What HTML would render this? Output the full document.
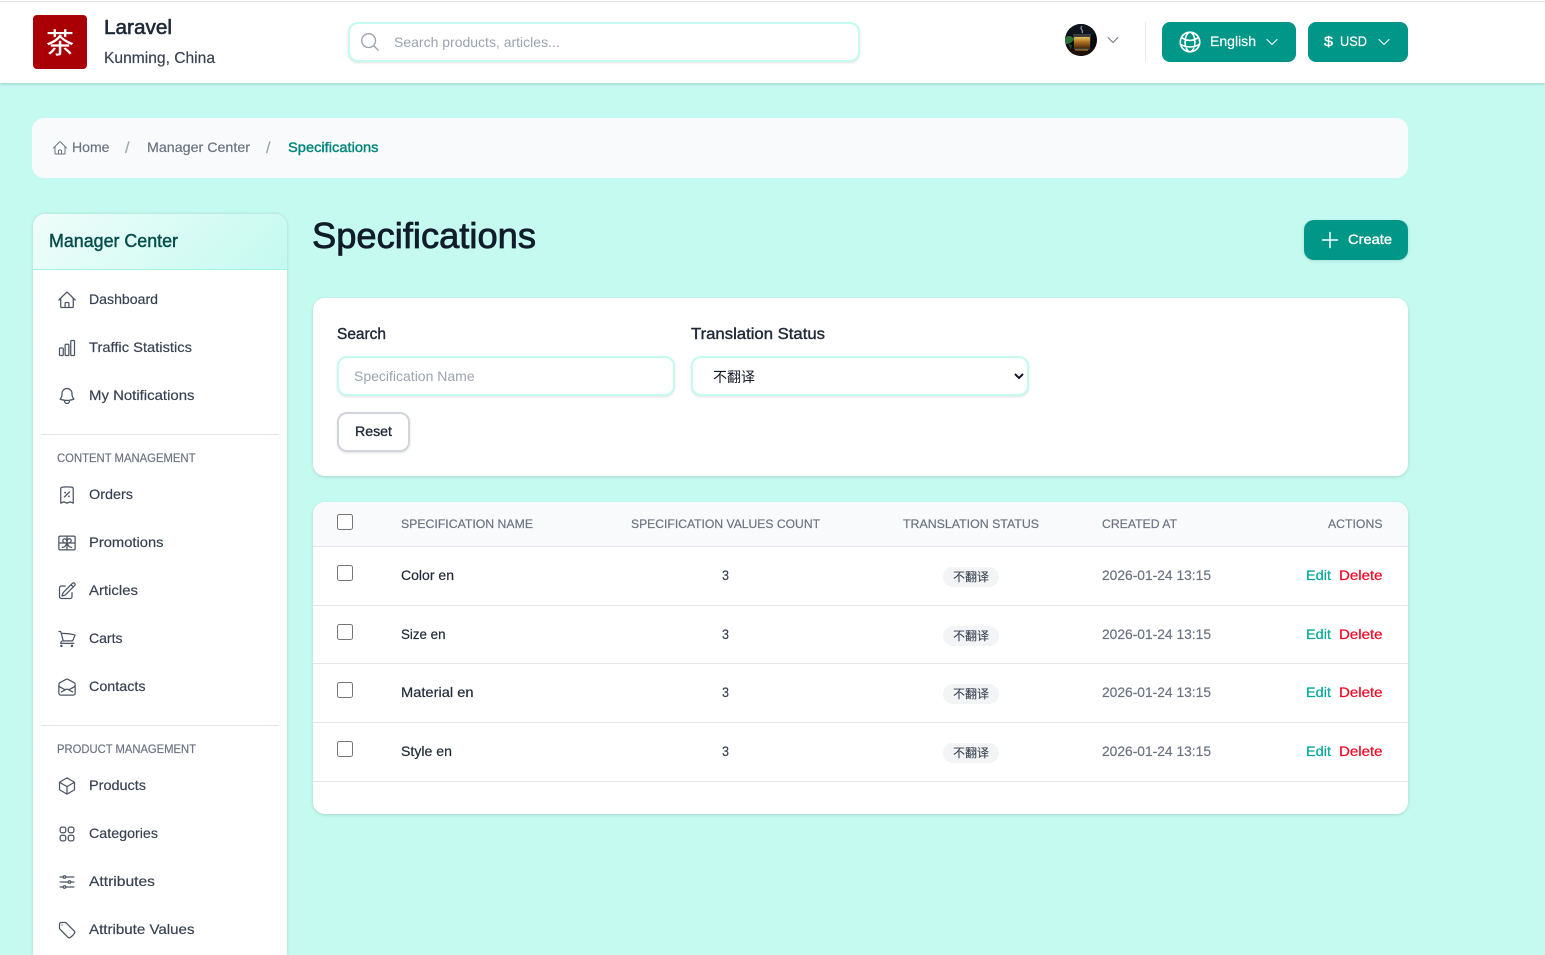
<!DOCTYPE html>
<html lang="en"><head><meta charset="utf-8"><title>Specifications</title>
<style>
*{box-sizing:border-box}
html,body{margin:0;padding:0;width:1545px;height:955px;overflow:hidden;background:#c4faef;font-family:"Liberation Sans","Noto Sans CJK SC",sans-serif}
.b{position:absolute;display:block}
input,select{position:absolute;margin:0;font-family:"Liberation Sans","Noto Sans CJK SC",sans-serif;outline:none}
input[type=text]{background:#fff;border:2px solid #c4faef;border-radius:10px;font-size:14px;color:#374151;box-shadow:0 1px 2px rgba(0,0,0,.12)}
input::placeholder{color:#9ca3af;opacity:1}
input[type=checkbox]{width:16px;height:16px;left:337px}
svg.layer{position:absolute;left:0;top:0;z-index:5;pointer-events:none}
text{font-family:"Liberation Sans","Noto Sans CJK SC",sans-serif;font-size:14px;fill:#374151;stroke:#374151;stroke-width:.18px}
text[style*="#6b7280"]{stroke:#6b7280}
text[style*="#fff"]{stroke:#fff}
text[style*="#00a896"]{stroke:#00a896}
text[style*="#f5001f"]{stroke:#f5001f}
.m{stroke-width:.35px}
.ic{fill:none;stroke:#4b5563;stroke-width:1.5;stroke-linecap:round;stroke-linejoin:round}
.w{fill:none;stroke:#fff;stroke-width:1.5;stroke-linecap:round;stroke-linejoin:round}
</style></head><body>

<!-- header -->
<div class="b" style="left:0;top:0;width:1545px;height:83px;background:#fff;box-shadow:0 1px 3px rgba(0,0,0,.18)"></div>
<div class="b" style="left:0;top:1px;width:1545px;height:1px;background:#e2e4e8"></div>
<div class="b" style="left:33px;top:15px;width:54px;height:54px;background:#a90005;border-radius:4px"></div>
<input type="text" placeholder="Search products, articles..." style="left:348px;top:22px;width:512px;height:40px;padding-left:44px">
<div class="b" style="left:1145px;top:22px;width:1px;height:40px;background:#e5e7eb"></div>
<div class="b" style="left:1162px;top:22px;width:134px;height:40px;background:#009688;border-radius:8px"></div>
<div class="b" style="left:1308px;top:22px;width:100px;height:40px;background:#009688;border-radius:8px"></div>

<!-- breadcrumb -->
<div class="b" style="left:32px;top:118px;width:1376px;height:60px;background:#f9fafb;border-radius:12px"></div>

<!-- sidebar -->
<div class="b" style="left:33px;top:214px;width:254px;height:741px;background:#fff;border-radius:12px 12px 0 0;box-shadow:0 0 3px rgba(0,0,0,.14)"></div>
<div class="b" style="left:33px;top:214px;width:254px;height:56px;background:linear-gradient(135deg,#f0fdfa 0%,#c4faef 100%);border-radius:12px 12px 0 0;border-bottom:1px solid #a3f3e1"></div>
<div class="b" style="left:41px;top:434px;width:238px;height:1px;background:#e5e7eb"></div>
<div class="b" style="left:41px;top:725px;width:238px;height:1px;background:#e5e7eb"></div>

<!-- create -->
<div class="b" style="left:1304px;top:220px;width:104px;height:40px;background:#009688;border-radius:10px;box-shadow:0 1px 3px rgba(0,0,0,.12)"></div>

<!-- filter card -->
<div class="b" style="left:313px;top:298px;width:1095px;height:178px;background:#fff;border-radius:12px;box-shadow:0 1px 3px rgba(0,0,0,.14)"></div>
<input type="text" placeholder="Specification Name" style="left:337px;top:356px;width:338px;height:40px;padding-left:15px">
<select style="left:691px;top:356px;width:338px;height:40px;background:#fff;border:2px solid #c4faef;border-radius:10px;font-size:14px;color:#111827;padding:2px 0 0 16px;box-shadow:0 1px 2px rgba(0,0,0,.12)"><option>不翻译</option></select>
<div class="b" style="left:337px;top:412px;width:73px;height:40px;background:#fff;border:2px solid #d1d5db;border-radius:10px;box-shadow:0 1px 2px rgba(0,0,0,.12)"></div>

<!-- table card -->
<div class="b" style="left:313px;top:502px;width:1095px;height:312px;background:#fff;border-radius:12px;box-shadow:0 1px 3px rgba(0,0,0,.14)"></div>
<div class="b" style="left:313px;top:502px;width:1095px;height:45px;background:#f9fafb;border-radius:12px 12px 0 0;border-bottom:1px solid #e5e7eb"></div>
<div class="b" style="left:313px;top:605px;width:1095px;height:1px;background:#e5e7eb"></div>
<div class="b" style="left:313px;top:663px;width:1095px;height:1px;background:#e5e7eb"></div>
<div class="b" style="left:313px;top:722px;width:1095px;height:1px;background:#e5e7eb"></div>
<div class="b" style="left:313px;top:781px;width:1095px;height:1px;background:#e5e7eb"></div>
<input type="checkbox" style="top:514px"><input type="checkbox" style="top:565px"><input type="checkbox" style="top:624px"><input type="checkbox" style="top:682px"><input type="checkbox" style="top:741px">
<div class="b" style="left:943px;top:567px;width:56px;height:20px;background:#f3f4f6;border-radius:10px"></div>
<div class="b" style="left:943px;top:626px;width:56px;height:20px;background:#f3f4f6;border-radius:10px"></div>
<div class="b" style="left:943px;top:684px;width:56px;height:20px;background:#f3f4f6;border-radius:10px"></div>
<div class="b" style="left:943px;top:743px;width:56px;height:20px;background:#f3f4f6;border-radius:10px"></div>

<svg class="layer" width="1545" height="955" viewBox="0 0 1545 955" xmlns="http://www.w3.org/2000/svg">
<defs>
<symbol id="home" viewBox="0 0 24 24"><path d="M2.25 12l8.954-8.955c.44-.439 1.152-.439 1.591 0L21.75 12M4.5 9.75v10.125c0 .621.504 1.125 1.125 1.125H9.75v-4.875c0-.621.504-1.125 1.125-1.125h2.25c.621 0 1.125.504 1.125 1.125V21h4.125c.621 0 1.125-.504 1.125-1.125V9.75M8.25 21h8.25"/></symbol>
<symbol id="chart" viewBox="0 0 24 24"><path d="M3 13.125C3 12.504 3.504 12 4.125 12h2.25c.621 0 1.125.504 1.125 1.125v6.75C7.5 20.496 6.996 21 6.375 21h-2.25A1.125 1.125 0 013 19.875v-6.75zM9.75 8.625c0-.621.504-1.125 1.125-1.125h2.25c.621 0 1.125.504 1.125 1.125v11.25c0 .621-.504 1.125-1.125 1.125h-2.25a1.125 1.125 0 01-1.125-1.125V8.625zM16.5 4.125c0-.621.504-1.125 1.125-1.125h2.25C20.496 3 21 3.504 21 4.125v15.75c0 .621-.504 1.125-1.125 1.125h-2.25a1.125 1.125 0 01-1.125-1.125V4.125z"/></symbol>
<symbol id="bell" viewBox="0 0 24 24"><path d="M14.857 17.082a23.848 23.848 0 005.454-1.31A8.967 8.967 0 0118 9.75v-.7V9A6 6 0 006 9v.75a8.967 8.967 0 01-2.312 6.022c1.733.64 3.56 1.085 5.455 1.31m5.714 0a24.255 24.255 0 01-5.714 0m5.714 0a3 3 0 11-5.714 0"/></symbol>
<symbol id="receipt" viewBox="0 0 24 24"><path d="M9 14.25l6-6m4.5-3.493V21.75l-3.75-1.5-3.75 1.5-3.75-1.5-3.75 1.5V4.757c0-1.108.806-2.057 1.907-2.185a48.507 48.507 0 0111.186 0c1.1.128 1.907 1.077 1.907 2.185zM9.75 9h.008v.008H9.75V9zm.375 0a.375.375 0 11-.75 0 .375.375 0 01.75 0zm4.125 4.5h.008v.008h-.008V13.5zm.375 0a.375.375 0 11-.75 0 .375.375 0 01.75 0z"/></symbol>
<symbol id="gift" viewBox="0 0 24 24"><path d="M12 3.75v16.5M2.25 12h19.5M6.375 17.25a4.875 4.875 0 004.875-4.875V12m6.375 5.25a4.875 4.875 0 01-4.875-4.875V12m-9 8.25h16.5a1.5 1.5 0 001.5-1.5V5.25a1.5 1.5 0 00-1.5-1.5H3.75a1.5 1.5 0 00-1.5 1.5v13.5a1.5 1.5 0 001.5 1.5zm12.621-9.44c-1.409 1.41-4.242 1.061-4.242 1.061s-.349-2.833 1.06-4.242a2.25 2.25 0 013.182 3.182zM10.773 7.63c1.409 1.409 1.06 4.242 1.06 4.242S9 12.22 7.592 10.811a2.25 2.25 0 113.182-3.182z"/></symbol>
<symbol id="pencil" viewBox="0 0 24 24"><path d="M16.862 4.487l1.687-1.688a1.875 1.875 0 112.652 2.652L10.582 16.07a4.5 4.5 0 01-1.897 1.13L6 18l.8-2.685a4.5 4.5 0 011.13-1.897l8.932-8.931zm0 0L19.5 7.125M18 14v4.75A2.25 2.25 0 0115.75 21H5.25A2.25 2.25 0 013 18.75V8.25A2.25 2.25 0 015.25 6H10"/></symbol>
<symbol id="cart" viewBox="0 0 24 24"><path d="M2.25 3h1.386c.51 0 .955.343 1.087.835l.383 1.437M7.5 14.25a3 3 0 00-3 3h15.75m-12.75-3h11.218c1.121-2.3 2.1-4.684 2.924-7.138a60.114 60.114 0 00-16.536-1.84M7.5 14.25L5.106 5.272M6 20.25a.75.75 0 11-1.5 0 .75.75 0 011.5 0zm12.75 0a.75.75 0 11-1.5 0 .75.75 0 011.5 0z"/></symbol>
<symbol id="mail" viewBox="0 0 24 24"><path d="M21.75 9v.906a2.25 2.25 0 01-1.183 1.981l-6.478 3.488M2.25 9v.906a2.25 2.25 0 001.183 1.981l6.478 3.488m8.839 2.51l-4.66-2.51m0 0l-1.023-.55a2.25 2.25 0 00-2.134 0l-1.022.55m0 0l-4.661 2.51m16.5 1.615a2.25 2.25 0 01-2.25 2.25h-15a2.25 2.25 0 01-2.25-2.25V8.844a2.25 2.25 0 011.183-1.98l7.5-4.04a2.25 2.25 0 012.134 0l7.5 4.04a2.25 2.25 0 011.183 1.98V18z"/></symbol>
<symbol id="cube" viewBox="0 0 24 24"><path d="M21 7.5l-9-5.25L3 7.5m18 0l-9 5.25m9-5.25v9l-9 5.25M3 7.5l9 5.25M3 7.5v9l9 5.25m0-9v9"/></symbol>
<symbol id="grid" viewBox="0 0 24 24"><path d="M3.75 6A2.25 2.25 0 016 3.75h2.25A2.25 2.25 0 0110.5 6v2.25a2.25 2.25 0 01-2.25 2.25H6a2.25 2.25 0 01-2.25-2.25V6zM3.75 15.75A2.25 2.25 0 016 13.5h2.25a2.25 2.25 0 012.25 2.25V18a2.25 2.25 0 01-2.25 2.25H6A2.25 2.25 0 013.75 18v-2.25zM13.5 6a2.25 2.25 0 012.25-2.25H18A2.25 2.25 0 0120.25 6v2.25A2.25 2.25 0 0118 10.5h-2.25a2.25 2.25 0 01-2.25-2.25V6zM13.5 15.75a2.25 2.25 0 012.25-2.25H18a2.25 2.25 0 012.25 2.25V18A2.25 2.25 0 0118 20.25h-2.25A2.25 2.25 0 0113.5 18v-2.25z"/></symbol>
<symbol id="adj" viewBox="0 0 24 24"><path d="M10.5 6h9.75M10.5 6a1.5 1.5 0 11-3 0m3 0a1.5 1.5 0 10-3 0M3.75 6H7.5m3 12h9.75m-9.75 0a1.5 1.5 0 01-3 0m3 0a1.5 1.5 0 00-3 0m-3.75 0H7.5m9-6h3.75m-3.75 0a1.5 1.5 0 01-3 0m3 0a1.5 1.5 0 00-3 0m-9.75 0h9.75"/></symbol>
<symbol id="tag" viewBox="0 0 24 24"><path d="M9.568 3H5.25A2.25 2.25 0 003 5.25v4.318c0 .597.237 1.17.659 1.591l9.581 9.581c.699.699 1.78.872 2.607.33a18.095 18.095 0 005.223-5.223c.542-.827.369-1.908-.33-2.607L11.16 3.66A2.25 2.25 0 009.568 3zM6 6h.008v.008H6V6z"/></symbol>
<symbol id="search" viewBox="0 0 24 24"><path d="M21 21l-5.197-5.197m0 0A7.5 7.5 0 105.196 5.196a7.5 7.5 0 0010.607 10.607z"/></symbol>
<symbol id="globe" viewBox="0 0 24 24"><path d="M12 21a9.004 9.004 0 008.716-6.747M12 21a9.004 9.004 0 01-8.716-6.747M12 21c2.485 0 4.5-4.03 4.5-9S14.485 3 12 3m0 18c-2.485 0-4.5-4.03-4.5-9S9.515 3 12 3m0 0a8.997 8.997 0 017.843 4.582M12 3a8.997 8.997 0 00-7.843 4.582m15.686 0A11.953 11.953 0 0112 10.5c-2.998 0-5.74-1.1-7.843-2.918m15.686 0A8.959 8.959 0 0121 12c0 .778-.099 1.533-.284 2.253m0 0A17.919 17.919 0 0112 16.5c-3.162 0-6.133-.815-8.716-2.247m0 0A9.004 9.004 0 013 12c0-1.605.42-3.113 1.157-4.418"/></symbol>
<symbol id="chev" viewBox="0 0 24 24"><path d="M19.5 8.25l-7.5 7.5-7.5-7.5"/></symbol>
<symbol id="plus" viewBox="0 0 24 24"><path d="M12 4.5v15m7.5-7.5h-15"/></symbol>
<clipPath id="avc"><circle cx="1081" cy="40" r="16"/></clipPath>
<linearGradient id="tea" x1="0" y1="0" x2="0" y2="1"><stop offset="0" stop-color="#e8c25a"/><stop offset=".5" stop-color="#a56a1c"/><stop offset="1" stop-color="#4a2c10"/></linearGradient>
</defs>

<!-- header content -->
<text x="60" y="53" text-anchor="middle" style="font-size:28px;fill:#fff">茶</text>
<text x="104" y="34" textLength="68" lengthAdjust="spacingAndGlyphs" style="font-size:20px;fill:#1f2937;stroke:#1f2937;stroke-width:.6px">Laravel</text>
<text x="104" y="63" textLength="111" lengthAdjust="spacingAndGlyphs" style="font-size:16px;fill:#374151">Kunming, China</text>
<use href="#search" x="359" y="31" width="22" height="22" style="fill:none;stroke:#9ca3af;stroke-width:1.5;stroke-linecap:round;stroke-linejoin:round"/>
<g clip-path="url(#avc)">
<rect x="1065" y="24" width="32" height="32" fill="#07090e"/>
<rect x="1065" y="24" width="32" height="11" fill="#10141d"/>
<path d="M1065 48h32v8h-32z" fill="#1d0f0a"/>
<path d="M1082 26c-3 3 2 4 0 7" fill="none" stroke="#8d99aa" stroke-width="1.2"/>
<path d="M1073 34h18l-1 14c0 1-1 2-2 2h-12c-1 0-2-1-2-2z" fill="#3a3d3c"/>
<rect x="1074" y="37" width="16" height="11" rx="1" fill="url(#tea)"/>
<path d="M1065 38c3-3 6-3 9 1-2 4-5 5-9 5z" fill="#2c7336"/>
<path d="M1068 44l4 1-1 4z" fill="#1e4f27"/>
<path d="M1075 50h13" stroke="#c78a2a" stroke-width="1"/>
</g>
<use href="#chev" x="1105" y="32" width="16" height="16" style="fill:none;stroke:#6b7280;stroke-width:1.5;stroke-linecap:round;stroke-linejoin:round"/>
<use href="#globe" class="w" x="1177" y="29" width="26" height="26"/>
<text x="1210" y="46" textLength="46" lengthAdjust="spacingAndGlyphs" style="fill:#fff">English</text>
<use href="#chev" class="w" x="1264" y="34" width="16" height="16"/>
<text x="1324" y="46" textLength="9" lengthAdjust="spacingAndGlyphs" class="m" style="fill:#fff">$</text>
<text x="1340" y="46" textLength="27" lengthAdjust="spacingAndGlyphs" style="fill:#fff">USD</text>
<use href="#chev" class="w" x="1376" y="34" width="16" height="16"/>

<!-- breadcrumb -->
<use href="#home" x="52" y="140" width="16" height="16" style="fill:none;stroke:#6b7280;stroke-width:1.5;stroke-linecap:round;stroke-linejoin:round"/>
<text x="72" y="152" textLength="37.5" lengthAdjust="spacingAndGlyphs" style="fill:#6b7280">Home</text>
<text x="125" y="153" style="font-size:16px;fill:#9ca3af;stroke:#9ca3af">/</text>
<text x="147" y="152" textLength="103" lengthAdjust="spacingAndGlyphs" style="fill:#6b7280">Manager Center</text>
<text x="266" y="153" style="font-size:16px;fill:#9ca3af;stroke:#9ca3af">/</text>
<text x="288" y="152" textLength="90.5" lengthAdjust="spacingAndGlyphs" style="fill:#00857a;stroke:#00857a;stroke-width:.4px">Specifications</text>

<!-- sidebar -->
<text x="49" y="247" textLength="129" lengthAdjust="spacingAndGlyphs" style="font-size:18px;fill:#064e4b;stroke:#064e4b;stroke-width:.45px">Manager Center</text>
<use href="#home" class="ic" x="57" y="290" width="20" height="20"/>
<text x="89" y="304" textLength="69" lengthAdjust="spacingAndGlyphs">Dashboard</text>
<use href="#chart" class="ic" x="57" y="338" width="20" height="20"/>
<text x="89" y="352" textLength="103" lengthAdjust="spacingAndGlyphs">Traffic Statistics</text>
<use href="#bell" class="ic" x="57" y="386" width="20" height="20"/>
<text x="89" y="400" textLength="105.500" lengthAdjust="spacingAndGlyphs">My Notifications</text>
<text x="57" y="462" textLength="138.500" lengthAdjust="spacingAndGlyphs" style="font-size:12px;fill:#6b7280">CONTENT MANAGEMENT</text>
<use href="#receipt" class="ic" x="57" y="485" width="20" height="20"/>
<text x="89" y="499" textLength="44" lengthAdjust="spacingAndGlyphs">Orders</text>
<use href="#gift" class="ic" x="57" y="533" width="20" height="20"/>
<text x="89" y="547" textLength="74.500" lengthAdjust="spacingAndGlyphs">Promotions</text>
<use href="#pencil" class="ic" x="57" y="581" width="20" height="20"/>
<text x="89" y="595" textLength="49" lengthAdjust="spacingAndGlyphs">Articles</text>
<use href="#cart" class="ic" x="57" y="629" width="20" height="20"/>
<text x="89" y="643" textLength="33.500" lengthAdjust="spacingAndGlyphs">Carts</text>
<use href="#mail" class="ic" x="57" y="677" width="20" height="20"/>
<text x="89" y="691" textLength="56.500" lengthAdjust="spacingAndGlyphs">Contacts</text>
<text x="57" y="753" textLength="139" lengthAdjust="spacingAndGlyphs" style="font-size:12px;fill:#6b7280">PRODUCT MANAGEMENT</text>
<use href="#cube" class="ic" x="57" y="776" width="20" height="20"/>
<text x="89" y="790" textLength="57" lengthAdjust="spacingAndGlyphs">Products</text>
<use href="#grid" class="ic" x="57" y="824" width="20" height="20"/>
<text x="89" y="838" textLength="69" lengthAdjust="spacingAndGlyphs">Categories</text>
<use href="#adj" class="ic" x="57" y="872" width="20" height="20"/>
<text x="89" y="886" textLength="66" lengthAdjust="spacingAndGlyphs">Attributes</text>
<use href="#tag" class="ic" x="57" y="920" width="20" height="20"/>
<text x="89" y="934" textLength="105.500" lengthAdjust="spacingAndGlyphs">Attribute Values</text>

<!-- title -->
<text x="312" y="248" textLength="224" lengthAdjust="spacingAndGlyphs" style="font-size:36px;fill:#111c2b;stroke:#111c2b;stroke-width:.8px">Specifications</text>
<use href="#plus" class="w" x="1318" y="228" width="24" height="24"/>
<text x="1348" y="244" textLength="44" lengthAdjust="spacingAndGlyphs" class="m" style="fill:#fff">Create</text>

<!-- filter -->
<text x="337" y="339" textLength="49" lengthAdjust="spacingAndGlyphs" style="font-size:16px;fill:#1f2937;stroke:#1f2937;stroke-width:.4px">Search</text>
<text x="691" y="339" textLength="134" lengthAdjust="spacingAndGlyphs" style="font-size:16px;fill:#1f2937;stroke:#1f2937;stroke-width:.4px">Translation Status</text>
<text x="355" y="436" textLength="37" lengthAdjust="spacingAndGlyphs" style="fill:#1f2937;stroke:#1f2937;stroke-width:.35px">Reset</text>

<!-- table head -->
<text x="401" y="528" textLength="132" lengthAdjust="spacingAndGlyphs" style="font-size:12px;fill:#6b7280">SPECIFICATION NAME</text>
<text x="631" y="528" textLength="189" lengthAdjust="spacingAndGlyphs" style="font-size:12px;fill:#6b7280">SPECIFICATION VALUES COUNT</text>
<text x="903" y="528" textLength="136" lengthAdjust="spacingAndGlyphs" style="font-size:12px;fill:#6b7280">TRANSLATION STATUS</text>
<text x="1102" y="528" textLength="75" lengthAdjust="spacingAndGlyphs" style="font-size:12px;fill:#6b7280">CREATED AT</text>
<text x="1328" y="528" textLength="54.500" lengthAdjust="spacingAndGlyphs" style="font-size:12px;fill:#6b7280">ACTIONS</text>

<!-- rows -->
<text x="401" y="580" textLength="53" lengthAdjust="spacingAndGlyphs" style="fill:#1f2937;stroke:#1f2937;stroke-width:.2px">Color en</text>
<text x="722" y="580" textLength="7" lengthAdjust="spacingAndGlyphs">3</text>
<text x="971" y="581" text-anchor="middle" style="font-size:12px;stroke-width:.1px">不翻译</text>
<text x="1102" y="580" textLength="109" lengthAdjust="spacingAndGlyphs" style="fill:#6b7280">2026-01-24 13:15</text>
<text x="1306" y="580" textLength="25" lengthAdjust="spacingAndGlyphs" style="fill:#00a896">Edit</text>
<text x="1339" y="580" textLength="43.500" lengthAdjust="spacingAndGlyphs" style="fill:#f5001f">Delete</text>

<text x="401" y="639" textLength="44.500" lengthAdjust="spacingAndGlyphs" style="fill:#1f2937;stroke:#1f2937;stroke-width:.2px">Size en</text>
<text x="722" y="639" textLength="7" lengthAdjust="spacingAndGlyphs">3</text>
<text x="971" y="640" text-anchor="middle" style="font-size:12px;stroke-width:.1px">不翻译</text>
<text x="1102" y="639" textLength="109" lengthAdjust="spacingAndGlyphs" style="fill:#6b7280">2026-01-24 13:15</text>
<text x="1306" y="639" textLength="25" lengthAdjust="spacingAndGlyphs" style="fill:#00a896">Edit</text>
<text x="1339" y="639" textLength="43.500" lengthAdjust="spacingAndGlyphs" style="fill:#f5001f">Delete</text>

<text x="401" y="697" textLength="72.500" lengthAdjust="spacingAndGlyphs" style="fill:#1f2937;stroke:#1f2937;stroke-width:.2px">Material en</text>
<text x="722" y="697" textLength="7" lengthAdjust="spacingAndGlyphs">3</text>
<text x="971" y="698" text-anchor="middle" style="font-size:12px;stroke-width:.1px">不翻译</text>
<text x="1102" y="697" textLength="109" lengthAdjust="spacingAndGlyphs" style="fill:#6b7280">2026-01-24 13:15</text>
<text x="1306" y="697" textLength="25" lengthAdjust="spacingAndGlyphs" style="fill:#00a896">Edit</text>
<text x="1339" y="697" textLength="43.500" lengthAdjust="spacingAndGlyphs" style="fill:#f5001f">Delete</text>

<text x="401" y="756" textLength="51" lengthAdjust="spacingAndGlyphs" style="fill:#1f2937;stroke:#1f2937;stroke-width:.2px">Style en</text>
<text x="722" y="756" textLength="7" lengthAdjust="spacingAndGlyphs">3</text>
<text x="971" y="757" text-anchor="middle" style="font-size:12px;stroke-width:.1px">不翻译</text>
<text x="1102" y="756" textLength="109" lengthAdjust="spacingAndGlyphs" style="fill:#6b7280">2026-01-24 13:15</text>
<text x="1306" y="756" textLength="25" lengthAdjust="spacingAndGlyphs" style="fill:#00a896">Edit</text>
<text x="1339" y="756" textLength="43.500" lengthAdjust="spacingAndGlyphs" style="fill:#f5001f">Delete</text>
</svg>
</body></html>
